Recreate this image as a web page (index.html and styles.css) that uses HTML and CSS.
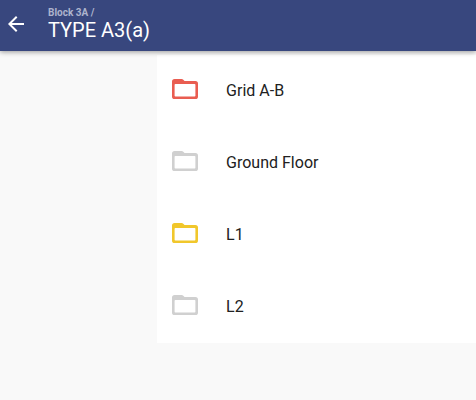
FILE: index.html
```html
<!DOCTYPE html>
<html lang="en">
<head>
<meta charset="utf-8">
<meta name="viewport" content="width=device-width, initial-scale=1">
<title>TYPE A3(a)</title>
<link rel="stylesheet" href="styles.css">
</head>
<body>
<svg width="0" height="0" class="sprite" aria-hidden="true">
  <symbol id="folder" viewBox="0 0 26 24">
    <path fill-rule="evenodd" d="M2.6 0H9.6Q10.6 0 11.3 .8L12.5 2H23.4Q26 2 26 4.6V17.4Q26 20 23.4 20H2.6Q0 20 0 17.4V2.6Q0 0 2.6 0ZM3.4 5Q2.6 5 2.6 5.8V16.8Q2.6 17.6 3.4 17.6H22.6Q23.4 17.6 23.4 16.8V5.8Q23.4 5 22.6 5Z"/>
  </symbol>
</svg>
<header class="bar">
  <button class="back" type="button" aria-label="Back">
    <svg viewBox="0 0 24 24" width="24" height="24"><path d="M20 11H7.83l5.59-5.59L12 4l-8 8 8 8 1.41-1.41L7.83 13H20v-2z"/></svg>
  </button>
  <div class="heading">
    <a class="crumb" href="#">Block 3A /</a>
    <h1 class="title">TYPE A3(a)</h1>
  </div>
</header>
<main class="content">
  <ul class="list">
    <li><a class="row" href="#"><svg class="folder red"><use href="#folder"/></svg><span>Grid A-B</span></a></li>
    <li><a class="row" href="#"><svg class="folder grey"><use href="#folder"/></svg><span>Ground Floor</span></a></li>
    <li><a class="row" href="#"><svg class="folder yellow"><use href="#folder"/></svg><span>L1</span></a></li>
    <li><a class="row" href="#"><svg class="folder grey"><use href="#folder"/></svg><span>L2</span></a></li>
  </ul>
</main>
</body>
</html>
```
FILE: styles.css
```css
* {
  box-sizing: border-box;
}

body {
  margin: 0;
  background: #f9f9f9;
  font-family: Roboto, "Liberation Sans", sans-serif;
  color: #212121;
}

.sprite {
  position: absolute;
}

.bar {
  position: relative;
  display: flex;
  align-items: flex-start;
  gap: 20px;
  padding: 7px 4px 10px;
  background: #38477e;
  box-shadow: 0 1px 5px rgba(0, 0, 0, 0.4);
  color: #fff;
}

.back {
  display: flex;
  margin-top: 5px;
  padding: 0;
  border: 0;
  background: none;
  fill: #fff;
  cursor: pointer;
}

.heading {
  display: flex;
  flex-direction: column;
}

.crumb {
  font-size: 10px;
  line-height: 12px;
  font-weight: 700;
  color: #adb4cd;
  text-decoration: none;
}

.title {
  margin: 0;
  font-size: 20px;
  line-height: 22px;
  font-weight: 400;
}

.content {
  padding: 4px 0 0 33%;
}

.list {
  margin: 0;
  padding: 0;
  list-style: none;
  background: #fff;
}

.row {
  display: flex;
  align-items: center;
  gap: 28px;
  height: 72px;
  padding: 0 15px;
  font-size: 16px;
  line-height: 24px;
  color: inherit;
  text-decoration: none;
}

.folder {
  width: 26px;
  height: 24px;
}

.red {
  fill: #e95d51;
}

.grey {
  fill: #d0d0d0;
}

.yellow {
  fill: #f1c72b;
}
```
